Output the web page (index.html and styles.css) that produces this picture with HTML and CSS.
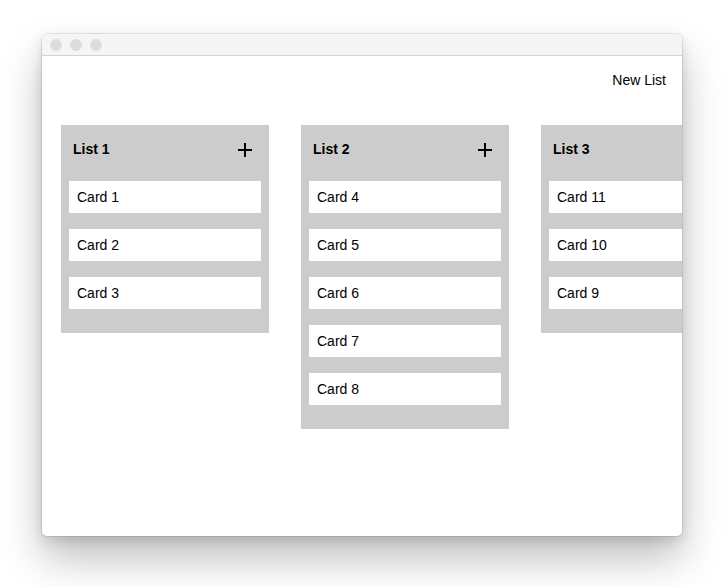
FILE: index.html
```html
<!DOCTYPE html>
<html>
<head>
<meta charset="utf-8">
<link rel="stylesheet" href="styles.css">
</head>
<body>
<div class="window">
  <div class="titlebar">
    <span class="dot"></span><span class="dot"></span><span class="dot"></span>
  </div>
  <div class="content">
    <div class="topbar"><span class="new-list">New List</span></div>
    <div class="board">
      <div class="list">
        <div class="list-header"><span class="list-title">List 1</span>
          <svg class="plus" width="14" height="14" viewBox="0 0 14 14"><path d="M7 0V14M0 7H14" stroke="#000" stroke-width="2"/></svg>
        </div>
        <div class="cards">
          <div class="card">Card 1</div>
          <div class="card">Card 2</div>
          <div class="card">Card 3</div>
        </div>
      </div>
      <div class="list">
        <div class="list-header"><span class="list-title">List 2</span>
          <svg class="plus" width="14" height="14" viewBox="0 0 14 14"><path d="M7 0V14M0 7H14" stroke="#000" stroke-width="2"/></svg>
        </div>
        <div class="cards">
          <div class="card">Card 4</div>
          <div class="card">Card 5</div>
          <div class="card">Card 6</div>
          <div class="card">Card 7</div>
          <div class="card">Card 8</div>
        </div>
      </div>
      <div class="list">
        <div class="list-header"><span class="list-title">List 3</span>
          <svg class="plus" width="14" height="14" viewBox="0 0 14 14"><path d="M7 0V14M0 7H14" stroke="#000" stroke-width="2"/></svg>
        </div>
        <div class="cards">
          <div class="card">Card 11</div>
          <div class="card">Card 10</div>
          <div class="card">Card 9</div>
        </div>
      </div>
    </div>
  </div>
</div>
</body>
</html>
```

FILE: styles.css
```css
html, body {
  margin: 0;
  padding: 0;
  background: #fff;
}
body {
  font-family: "Liberation Sans", Arial, sans-serif;
  font-size: 14px;
  color: #000;
  padding: 34px 0 0 42px;
  box-sizing: border-box;
  min-height: 586px;
  overflow: hidden;
}
.window {
  width: 640px;
  border-radius: 5px;
  overflow: hidden;
  background: #fff;
  box-shadow: 0 0 0 1px rgba(0,0,0,0.08), 0 22px 40px rgba(0,0,0,0.26), 0 4px 12px rgba(0,0,0,0.12);
}
.titlebar {
  height: 21px;
  border-bottom: 1px solid #d3d3d3;
  background: #f5f5f5;
  display: flex;
  align-items: center;
  gap: 8px;
  padding-left: 8px;
}
.dot {
  width: 12px;
  height: 12px;
  border-radius: 50%;
  background: #dcdcdc;
}
.content {
  height: 480px;
  overflow: hidden;
}
.topbar {
  height: 48px;
  display: flex;
  justify-content: flex-end;
  align-items: center;
  padding-right: 16px;
}
.new-list {
  line-height: 16px;
}
.board {
  display: flex;
  align-items: flex-start;
  gap: 32px;
  padding: 21px 0 0 19px;
}
.list {
  flex: 0 0 208px;
  background: #cccccc;
}
.list-header {
  height: 48px;
  display: flex;
  align-items: center;
  justify-content: space-between;
  padding: 0 17px 0 12px;
}
.list-title {
  font-weight: bold;
}
.plus {
  display: block;
  margin-top: 2px;
}
.cards {
  display: flex;
  flex-direction: column;
  gap: 16px;
  padding: 8px 8px 24px;
}
.card {
  background: #fff;
  height: 32px;
  line-height: 32px;
  padding-left: 8px;
}
```
